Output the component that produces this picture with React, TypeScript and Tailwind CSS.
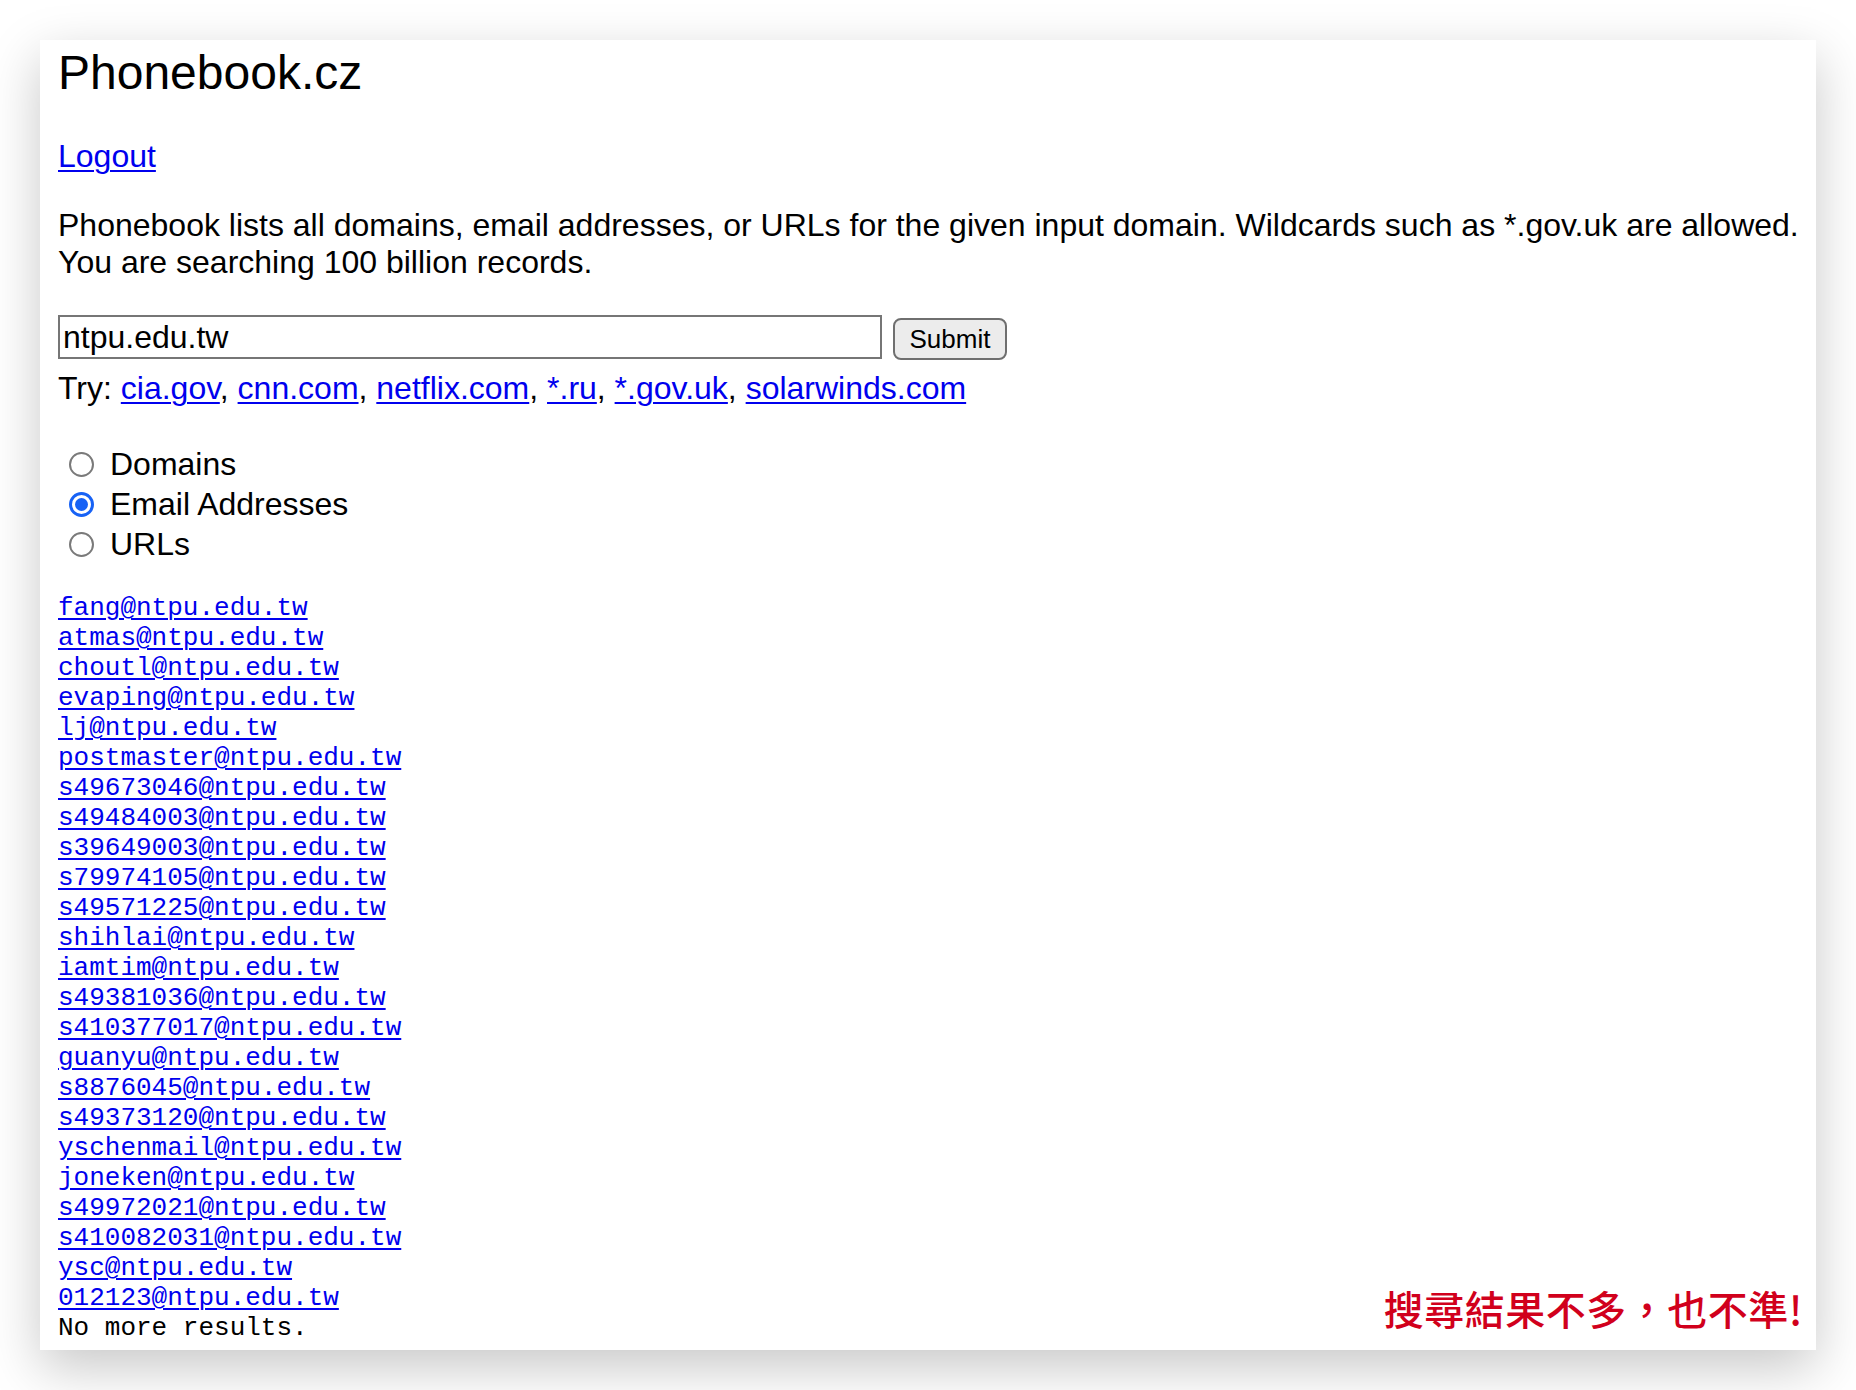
import React from 'react';

const emails = [
    'fang@ntpu.edu.tw',
    'atmas@ntpu.edu.tw',
    'choutl@ntpu.edu.tw',
    'evaping@ntpu.edu.tw',
    'lj@ntpu.edu.tw',
    'postmaster@ntpu.edu.tw',
    's49673046@ntpu.edu.tw',
    's49484003@ntpu.edu.tw',
    's39649003@ntpu.edu.tw',
    's79974105@ntpu.edu.tw',
    's49571225@ntpu.edu.tw',
    'shihlai@ntpu.edu.tw',
    'iamtim@ntpu.edu.tw',
    's49381036@ntpu.edu.tw',
    's410377017@ntpu.edu.tw',
    'guanyu@ntpu.edu.tw',
    's8876045@ntpu.edu.tw',
    's49373120@ntpu.edu.tw',
    'yschenmail@ntpu.edu.tw',
    'joneken@ntpu.edu.tw',
    's49972021@ntpu.edu.tw',
    's410082031@ntpu.edu.tw',
    'ysc@ntpu.edu.tw',
    '012123@ntpu.edu.tw',
];

const examples = ['cia.gov', 'cnn.com', 'netflix.com', '*.ru', '*.gov.uk', 'solarwinds.com'];

const modes = [
    { label: 'Domains', checked: false },
    { label: 'Email Addresses', checked: true },
    { label: 'URLs', checked: false },
];

const linkClass = 'text-[#0000ee] underline decoration-[2px] underline-offset-[3px]';

const Radio: React.FC<{ checked: boolean }> = ({ checked }) => (
    checked ? (
        <span className="w-[25px] h-[25px] rounded-full border-[3px] border-[#1762f5] flex items-center justify-center bg-white">
            <span className="w-[13px] h-[13px] rounded-full bg-[#1762f5]" />
        </span>
    ) : (
        <span className="w-[25px] h-[25px] rounded-full border-[2px] border-[#7a7a7a] bg-white" />
    )
);

export default function App() {
    return (
        <div className="w-full h-[1390px] bg-white pt-[40px] pl-[40px] font-['Liberation_Sans',Arial,sans-serif] text-black">
            <div className="relative w-[1776px] h-[1310px] bg-white pl-[18px] shadow-[0_18px_50px_rgba(0,0,0,0.22)]">
                <h1 className="pt-[5px] text-[48px] leading-[55px] font-normal">Phonebook.cz</h1>

                <div className="mt-[38px] text-[32px] leading-[37px]">
                    <a href="#" className={linkClass}>Logout</a>
                </div>

                <p className="mt-[32px] text-[32px] leading-[37px]">
                    Phonebook lists all domains, email addresses, or URLs for the given input domain. Wildcards such as *.gov.uk are allowed.
                    <br />
                    You are searching 100 billion records.
                </p>

                <div className="mt-[34px] flex items-start">
                    <input
                        defaultValue="ntpu.edu.tw"
                        className="w-[824px] h-[44px] border-[2px] border-[#767676] px-[3px] text-[32px] leading-[37px] outline-none"
                    />
                    <button className="ml-[11px] mt-[3px] w-[114px] h-[42px] rounded-[8px] border-[2px] border-[#6f6f6f] bg-[#ececec] text-[26px] leading-[30px]">
                        Submit
                    </button>
                </div>

                <div className="mt-[10px] text-[32px] leading-[37px]">
                    Try:{' '}
                    {examples.map((ex, i) => (
                        <React.Fragment key={ex}>
                            <a href="#" className={linkClass}>{ex}</a>
                            {i < examples.length - 1 ? ', ' : ''}
                        </React.Fragment>
                    ))}
                </div>

                <div className="mt-[37px] flex flex-col">
                    {modes.map(m => (
                        <label key={m.label} className="h-[40px] flex items-center text-[32px] leading-[37px]">
                            <span className="ml-[11px] mr-[16px] flex">
                                <Radio checked={m.checked} />
                            </span>
                            {m.label}
                        </label>
                    ))}
                </div>

                <div className="mt-[29px] flex flex-col items-start font-['Liberation_Mono','Courier_New',monospace] text-[26px] leading-[30px]">
                    {emails.map(email => (
                        <a key={email} href="#" className="text-[#0000ee] underline decoration-[2px] underline-offset-[3px]">
                            {email}
                        </a>
                    ))}
                    <span>No more results.</span>
                </div>

                <div className="absolute right-[13px] top-[1248px] text-[40px] leading-[40px] font-medium tracking-[0.5px] text-[#d1001c] font-['Noto_Sans_CJK_TC','Noto_Sans_CJK_SC',sans-serif]">
                    搜尋結果不多，也不準!
                </div>
            </div>
        </div>
    );
}
